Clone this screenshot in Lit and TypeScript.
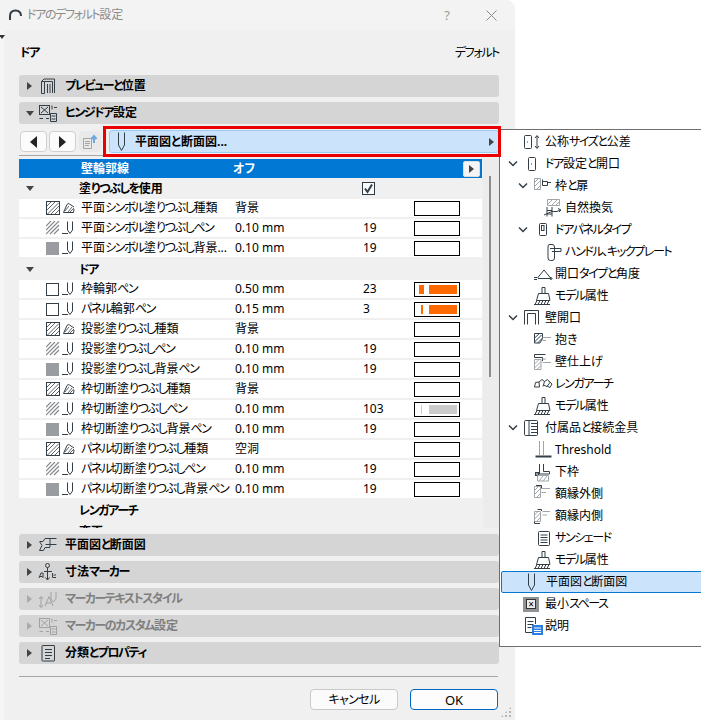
import { LitElement, html, css, svg } from "lit";
import { customElement } from "lit/decorators.js";

const ic = (w: number, h: number, body: unknown) =>
  html`<svg class="i" width=${w} height=${h} viewBox="0 0 ${w} ${h}">${body}</svg>`;

/* The reference face sets kana much narrower than kanji: tighten kana runs only. */
const jp = (s: string) =>
  s.split(/([\u3040-\u30ff、]+)/).map((p, i) => (i % 2 ? html`<span class="k">${p}</span>` : p));

/* table icons */
const hatchBox = ic(14, 14, svg`<rect x=".5" y=".5" width="13" height="13"/><path class="s" d="M1 5L5 1M1 9L9 1M1.500 13L13 1.500M5 13L13 5M9 13L13 9"/>`);
const hatchFree = ic(14, 14, svg`<path class="h" d="M0 5L5 0M0 9L9 0M0 13L13 0M4 13L13 4M8 13L13 8"/>`);
const greyBox = html`<span class="gbox"></span>`;
const emptyBox = html`<span class="ebox"></span>`;
const fillType = ic(14, 14, svg`<path d="M1.500 11.500L5 3.500Q6 2 7.500 3L12 6M1.500 11.500H11.500L12 8"/><path class="s" d="M3 10L7 5M6 11L10 6M8 11L12 7"/>`);
const pen = ic(14, 16, svg`<path d="M5.500 1.500V10L8 13.500L10.500 10V1.500M0 13.500H6"/>`);

/* accordion icons */
const a3d = ic(20, 20, svg`<path d="M3.500 5.500V17.500H6.500V5.500ZM3.500 5.500L6 3H16.500V17M6.500 5.500H14.500V17M9.500 8V17M12 8V17"/>`);
const aOpts = ic(20, 20, svg`<rect x="1.500" y="2.500" width="10" height="9"/><path d="M3 4L10 10M10 4L3 10M14 2.500V6.500M16 4.500H19M1.500 15.500H5M8 15.500H11M12.500 10.500H18.500V18.500H12.500ZM13.500 13H17.500M13.500 16H17.500"/>`);
const aPlan = ic(20, 20, svg`<path d="M2 6.500H5L7 3.500H18.500M12 3.500V12M7.500 9.500H18.500M12 12.500H7L5.500 15.500H1.500L4 10.500L1.500 6.500"/>`);
const aMark = ic(20, 20, svg`<circle cx="9.500" cy="3.500" r="2"/><path d="M9.500 5.500V17.500M7.500 15.500L9.500 18L11.500 15.500M6 9.500H14M1 16L3 11H5V16M1.500 14.500H4.500M14.500 11V15.500H18M15.500 13H18"/>`);
const aText = ic(20, 20, svg`<path class="d" d="M3 8V18M1 10L3 7.500L5 10M1 16L3 18.500L5 16M7 17L11 7.500L15 17M8.500 14H13.500M13 3V10L15.500 13L18 10V3"/>`);
const aOptsD = ic(20, 20, svg`<g class="d"><rect x="1.500" y="2.500" width="10" height="9"/><path d="M3 4L10 10M10 4L3 10M14 2.500V6.500M16 4.500H19M1.500 15.500H5M8 15.500H11M12.500 10.500H18.500V18.500H12.500ZM13.500 13H17.500M13.500 16H17.500"/></g>`);
const aInfo = ic(20, 20, svg`<path d="M4.500 2.500H16Q16.500 2.500 16.500 3V17.500Q16.500 18 16 18H4.500Q4 18 4 17.500V3Q4 2.500 4.500 2.500ZM7 6.500H14M7 9.500H14M7 12.500H14M7 15.500H12"/>`);

/* tree icons */
const hatchCol = svg`<path class="g" d="M1.500 2.500H7.500V13.500H1.500ZM1.500 6.500L5.500 2.500M1.500 10.500L7.500 4.500M3.500 13.500L7.500 9.500"/>`;
const brush = ic(20, 20, svg`<path d="M9 1.500H12V7.500H9ZM5.500 7.500H15.500L17 14.500H3.500ZM1 18.500H17M2 18.500L4 14.500M5 18.500L7 14.500M8 18.500L10 14.500M11 18.500L13 14.500M14 18.500L16 14.500"/>`);
const t: Record<string, unknown> = {
  size: ic(20, 20, svg`<rect x="1.500" y="3.500" width="7" height="13" rx="1"/><path d="M4 10h1M14 4V16M12 6L14 3.500L16 6M12 14L14 16.500L16 14"/>`),
  door: ic(20, 20, svg`<rect x="5.500" y="3.500" width="7" height="13" rx="1"/><path d="M8 10h1"/>`),
  frame: ic(20, 20, svg`${hatchCol}<path d="M9.500 5.500H14.500V9.500H9.500V3.500M14.500 6.500H18"/>`),
  vent: ic(20, 20, svg`<path class="g" d="M4.500 1.500H16.500V7.500H4.500ZM5 6L9 2M9 7L14 2M13 7L16.500 3.500"/><path d="M4 18.500V9M9 18.500V9M4 12.500H9M4 16H9M1 17L9 13.500H14L17 12M15 10.500L18 12L16 14"/>`),
  panel: ic(20, 20, svg`<rect x="6.500" y="3.500" width="7" height="12" rx="1"/><rect x="8.500" y="5.500" width="2.500" height="5"/>`),
  handle: ic(20, 20, svg`<path d="M6 2.500H9Q11.500 2.500 11.500 5V16Q11.500 18.500 9 18.500H7.500Q5 18.500 5 16V5Q5 2.500 6 2.500ZM7 6.500H18V9.500H9"/>`),
  open: ic(20, 20, svg`<path d="M4.500 14L11 6L18 14.500H5M1 13.500H4M1 15.500H4" /><circle cx="18" cy="14.500" r="1"/>`),
  brush,
  wall: ic(20, 20, svg`<path d="M1.500 16.500V2.500H15.500V16.500M4.500 16.500V5.500H12.500V16.500"/>`),
  reveal: ic(20, 20, svg`<path d="M1.500 3.500H9.500V8.500L7 13H1.500ZM1.500 8L6.500 3.500M1.500 12L8.500 5M4.500 13L9.500 8"/><path class="g" d="M9.500 7.500H18M9.500 10.500H13"/>`),
  finish: ic(20, 20, svg`<path d="M1.500 2.500H12.500M1.500 2.500V5.500H9.500V9"/><path class="g" d="M1.500 7.500H8V17.500H1.500ZM1.500 12L6 7.500M1.500 16L8 9.500M4 17.500L8 13.500M9.500 10.500H18M9.500 7H13"/>`),
  arch: ic(20, 20, svg`<path d="M1.500 13L2.500 8.500L6 8L6.500 13ZM6 8L9 5.500L11.500 7.500L10 12.500M11.500 7.500L14.500 5.500L17 8.500L14 12.500L10.500 11M16 7L19 10L17 13.500L14 12"/>`),
  thresh: ic(20, 20, svg`<path class="g" d="M6.500 1V15M10.500 1V15"/><path class="w2" d="M2.500 16.500H18.500"/>`),
  sill: ic(20, 20, svg`<path d="M6.500 2V12M10.500 2V9.500H16.500V12H2.500"/><rect x="2.500" y="10.500" width="3" height="3"/><path class="g" d="M4.500 13.500H15.500V19H4.500ZM6 19L10 14M10 19L14 14"/>`),
  casOut: ic(20, 20, svg`${hatchCol}<path d="M3 1.500H8.500V4.500"/><path class="g" d="M8.500 4.500H17M8.500 8.500H13"/>`),
  casIn: ic(20, 20, svg`<path class="g" d="M1.500 5.500H7.500V15.500H1.500ZM1.500 9L5 5.500M1.500 13L7.500 7M3.500 15.500L7.500 11.500M9.500 5.500H17M9.500 9H14"/><path d="M4.500 3.500H8.500V5M1.500 15.500V17.500H7"/>`),
  shade: ic(20, 20, svg`<rect x="5.500" y="3.500" width="11" height="14" rx="1"/><path d="M7.500 7H14.500M7.500 9.500H14.500M7.500 12H14.500M7.500 14.500H14.500"/>`),
  wallAcc: ic(20, 20, svg`<rect x="1.500" y="2.500" width="13" height="15" rx="1"/><path d="M6 2.500V17.500M8 5.500H14.500M8 8.500H14.500M8 11.500H14.500M8 14.500H14.500"/>`),
  plan: ic(20, 20, svg`<path d="M4.500 1.500V13L7.500 18.500L10.500 13V1.500"/>`),
  space: html`<span class="spacebox"><span>×</span></span>`,
  note: ic(20, 20, svg`<path d="M2.500 1.500H12.500V8M2.500 1.500V16.500H9M4.500 5.500H10.500M4.500 8.500H10.500M4.500 11.500H8.500"/><rect class="bl" x="9.500" y="9.500" width="10" height="9"/><path class="wl" d="M11 12H18M11 14.500H18M11 16.500H18"/>`),
};

const rows = [
  { k: "g", name: "塗りつぶしを使用", check: true },
  { a: hatchBox, b: fillType, name: "平面シンボル塗りつぶし種類", val: "背景", sw: "" },
  { a: hatchFree, b: pen, name: "平面シンボル塗りつぶしペン", val: "0.10 mm", n: "19", sw: "" },
  { a: greyBox, b: pen, name: "平面シンボル塗りつぶし背景...", val: "0.10 mm", n: "19", sw: "" },
  { k: "g", name: "ドア" },
  { a: emptyBox, b: pen, name: "枠輪郭ペン", val: "0.50 mm", n: "23", sw: "o1" },
  { a: emptyBox, b: pen, name: "パネル輪郭ペン", val: "0.15 mm", n: "3", sw: "o2" },
  { a: hatchBox, b: fillType, name: "投影塗りつぶし種類", val: "背景", sw: "" },
  { a: hatchFree, b: pen, name: "投影塗りつぶしペン", val: "0.10 mm", n: "19", sw: "" },
  { a: greyBox, b: pen, name: "投影塗りつぶし背景ペン", val: "0.10 mm", n: "19", sw: "" },
  { a: hatchBox, b: fillType, name: "枠切断塗りつぶし種類", val: "背景", sw: "" },
  { a: hatchFree, b: pen, name: "枠切断塗りつぶしペン", val: "0.10 mm", n: "103", sw: "gr" },
  { a: greyBox, b: pen, name: "枠切断塗りつぶし背景ペン", val: "0.10 mm", n: "19", sw: "" },
  { a: hatchBox, b: fillType, name: "パネル切断塗りつぶし種類", val: "空洞", sw: "" },
  { a: hatchFree, b: pen, name: "パネル切断塗りつぶしペン", val: "0.10 mm", n: "19", sw: "" },
  { a: greyBox, b: pen, name: "パネル切断塗りつぶし背景ペン", val: "0.10 mm", n: "19", sw: "" },
  { k: "g", name: "レンガアーチ", noTri: true },
  { k: "g", name: "変更", noTri: true },
] as any[];

const tree = [
  [0, 0, "size", "公称サイズと公差"],
  [0, 1, "door", "ドア設定と開口"],
  [1, 1, "frame", "枠と扉"],
  [2, 0, "vent", "自然換気"],
  [1, 1, "panel", "ドアパネルタイプ"],
  [2, 0, "handle", "ハンドル、キックプレート"],
  [1, 0, "open", "開口タイプと角度"],
  [1, 0, "brush", "モデル属性"],
  [0, 1, "wall", "壁開口"],
  [1, 0, "reveal", "抱き"],
  [1, 0, "finish", "壁仕上げ"],
  [1, 0, "arch", "レンガアーチ"],
  [1, 0, "brush", "モデル属性"],
  [0, 1, "wallAcc", "付属品と接続金具"],
  [1, 0, "thresh", "Threshold"],
  [1, 0, "sill", "下枠"],
  [1, 0, "casOut", "額縁外側"],
  [1, 0, "casIn", "額縁内側"],
  [1, 0, "shade", "サンシェード"],
  [1, 0, "brush", "モデル属性"],
  [0, 0, "plan", "平面図と断面図", true],
  [0, 0, "space", "最小スペース"],
  [0, 0, "note", "説明"],
] as any[];

@customElement("app-root")
export class AppRoot extends LitElement {
  static styles = css`
    :host {
      display: block;
      width: 701px;
      height: 720px;
      position: relative;
      overflow: hidden;
      background: #fff;
      font: 12px/16px "Noto Sans", "Noto Sans CJK JP", sans-serif;
      font-feature-settings: "palt";
      color: #000;
    }
    .k { letter-spacing: -1.4px; }
    .tight { letter-spacing: -0.6px; }
    .i { display: block; fill: none; stroke: #343e46; stroke-width: 1; }
    .i .g { stroke: #a3a6a9; }
    .i .h { stroke: #85898c; stroke-width: 1.2; }
    .i .s { stroke: #5f666c; }
    .i .d, .i .d * { stroke: #a2a2a2; }
    .i .bl { fill: #2f7de1; stroke: #2f7de1; }
    .i .wl { stroke: #fff; }
    .i .w2 { stroke-width: 2; }
    .i .up { stroke: #6fa8dc; stroke-width: 2; }
    .i .x { stroke: #8a8a8a; }
    .dialog {
      width: 515px;
      height: 720px;
      background: #f5f5f5;
      border-top-right-radius: 9px;
      display: flex;
      flex-direction: column;
      position: relative;
    }
    .title {
      height: 30px;
      flex: none;
      display: flex;
      align-items: center;
      background: #f3f3f3;
      border-top-right-radius: 9px;
      color: #8b8b8b;
      padding: 0 18px 0 9px;
    }
    .title .ttext { margin-left: 5px; flex: 1; }
    .title .q { font-size: 13px; color: #9a9a9a; margin-right: 36px; }
    .body {
      flex: 1;
      margin-left: 4px;
      background: #f0f0f0;
      padding: 13px 16px 0 15px;
      display: flex;
      flex-direction: column;
    }
    .mini {
      position: absolute;
      left: 0;
      top: 35px;
      border: 3px solid transparent;
      border-top: 4px solid #333;
      border-bottom: 0;
      margin-left: -1px;
    }
    .head { height: 20px; display: flex; justify-content: space-between; align-items: center; padding: 0 0 0 1px; margin-bottom: 12px; flex: none; }
    .acc {
      height: 22px;
      flex: none;
      background: #d5d5d5;
      border-radius: 3px;
      margin-bottom: 5px;
      display: flex;
      align-items: center;
      padding-left: 7px;
      font-weight: 700;
    }
    .acc.off { color: #7f7f7f; }
    .acc svg { margin-left: 5px; margin-right: 7px; }
    .tri { width: 0; height: 0; border-style: solid; border-color: transparent; flex: none; }
    .tri.r { border-width: 4px 0 4px 5px; border-left-color: #444; margin-left: 1px; margin-right: 1px; }
    .tri.dn { border-width: 5px 4px 0 4px; border-top-color: #444; }
    .off .tri.r { border-left-color: #aaa; }
    .acc .tri.dn + svg { margin-left: 4px; }
    .toolbar { height: 27px; flex: none; border-bottom: 1px solid #a6a6a6; display: flex; align-items: flex-start; padding: 2px 0 0 1px; gap: 2px; box-sizing: border-box; width: 100%; margin-bottom: 3px; }
    .tb { width: 27px; height: 21px; box-sizing: border-box; background: #fbfbfb; border: 1px solid #d0d0d0; border-radius: 4px; display: flex; align-items: center; justify-content: center; }
    .tb.ghost { width: 22px; background: #e9e9e9; border-color: #e9e9e9; margin-left: 1px; }
    .tb .l, .tb .rr { width: 0; height: 0; border-style: solid; border-color: transparent; }
    .tb .l { border-width: 6px 7px 6px 0; border-right-color: #222; }
    .tb .rr { border-width: 6px 0 6px 7px; border-left-color: #222; }
    .combo {
      margin: -1px 0 0 6px;
      flex: 1;
      height: 23px;
      box-sizing: border-box;
      background: #cce4fb;
      border: 1px solid #9ccbf5;
      border-radius: 3px;
      display: flex;
      align-items: center;
      font-weight: 700;
      padding-right: 3px;
    }
    .combo svg { margin-left: 3px; margin-right: 2px; }
    .combo .lbl { flex: 1; }
    .tableWrap { height: 369px; flex: none; display: flex; margin-bottom: 6px; }
    .table { width: 463px; height: 369px; overflow: hidden; flex: none; }
    .scroll { flex: 1; background: #ececec; position: relative; margin-left: 1px; }
    .thumb { width: 2px; height: 201px; background: #8d8d8d; margin: 17px 0 0 6px; }
    .blue { height: 19px; background: #0078d4; color: #fff; font-weight: 700; display: grid; grid-template-columns: 62px 152px 1fr 19px; align-items: center; }
    .blue .lbl { grid-column: 2; }
    .blue .more { width: 17px; height: 16px; box-sizing: border-box; background: #f5f5f5; border: 1px solid #ddd; border-radius: 2px; display: flex; align-items: center; justify-content: center; grid-column: 4; }
    .group { height: 21px; background: #f0f0f0; font-weight: 700; display: grid; grid-template-columns: 60px 283px 1fr; align-items: center; }
    .group .tri { margin-left: 7px; display: block; }
    .check { width: 13px; height: 13px; box-sizing: border-box; border: 1px solid #2f3b45; background: #fafafa; display: block; }
    .row { height: 20px; box-sizing: border-box; background: #fff; border-bottom: 2px solid #f0f0f0; display: grid; grid-template-columns: 16px 19px 154px 128px 51px 46px; padding-left: 27px; align-items: center; }
    .row .txt { white-space: nowrap; }
    .gbox { display: block; width: 13px; height: 13px; background: #999da1; }
    .ebox { display: block; width: 13px; height: 13px; box-sizing: border-box; border: 1px solid #343e46; background: #fff; }
    .sw { width: 46px; height: 15px; box-sizing: border-box; border: 1px solid #000; background: #fff; display: flex; align-items: center; padding: 0 2px 0 4px; }
    .sw i { display: block; height: 9px; background: #ff6a00; }
    .sw i.tick { width: 5px; margin-right: 5px; }
    .sw i.bar { width: 28px; }
    .sw.o2 i.tick { width: 2px; margin-left: 2px; margin-right: 6px; }
    .sw.gr i { background: #cbcbcb; }
    .sw.gr i.tick { width: 1px; margin-left: 2px; margin-right: 7px; }
    .rule { height: 1px; background: #a6a6a6; flex: none; margin-top: 7px; margin-bottom: 12px; width: 479px; }
    .btns { display: flex; justify-content: flex-end; gap: 12px; padding-right: 1px; }
    .btn { width: 88px; height: 21px; box-sizing: border-box; background: #fbfbfb; border: 1px solid #c9c9c9; border-radius: 4px; display: flex; align-items: center; justify-content: center; }
    .btn.ok { border: 1px solid #0067c0; box-shadow: inset 0 0 0 1px #fff; background: #fdfdfd; font-size: 13px; }
    .grip { position: absolute; right: 3px; bottom: 2px; width: 12px; height: 12px; background-image: radial-gradient(#b5b5b5 1px, transparent 1.2px); background-size: 4px 4px; clip-path: polygon(100% 0, 100% 100%, 0 100%); }
    .popup {
      position: absolute;
      left: 499px;
      top: 129px;
      width: 210px;
      height: 518px;
      box-sizing: border-box;
      background: #fff;
      border: 1px solid #6e6e6e;
      padding-top: 1px;
    }
    .node { height: 22px; box-sizing: border-box; display: flex; align-items: center; white-space: nowrap; }
    .node.l0 { padding-left: 8px; }
    .node.l1 { padding-left: 18px; }
    .node.l2 { padding-left: 28px; }
    .chev { width: 10px; flex: none; }
    .chev svg { stroke-width: 1.5; }
    .iconbox { width: 20px; margin-left: 5px; margin-right: 2px; flex: none; }
    .node.sel { margin-left: 1px; padding-left: 7px; background: #cce4fb; border: 1px solid #0078d4; border-radius: 2px; }
    .spacebox { display: flex; width: 16px; height: 15px; background: #8f9396; align-items: center; justify-content: center; }
    .spacebox span { display: block; width: 10px; height: 10px; box-sizing: border-box; line-height: 8px; text-align: center; border: 1px solid #333; background: #eee; font-size: 10px; }
    .red { position: absolute; left: 103px; top: 126px; width: 398px; height: 31px; box-sizing: border-box; border: 3px solid #ea0000; }
  `;

  private acc(ico: unknown, label: string, open = false, off = false) {
    return html`<div class="acc ${off ? "off" : ""}">
      <span class="tri ${open ? "dn" : "r"}"></span>${ico}<span>${jp(label)}</span>
    </div>`;
  }

  private row(r: any) {
    if (r.k === "g") {
      return html`<div class="group">
        <span>${r.noTri ? "" : html`<span class="tri dn"></span>`}</span>
        <span>${jp(r.name)}</span>
        ${r.check
          ? html`<span class="check"><svg class="i" width="11" height="11" viewBox="0 0 11 11"><path class="w2" d="M2 5.500L4.500 9L9 1.500"/></svg></span>`
          : ""}
      </div>`;
    }
    return html`<div class="row">
      ${r.a}${r.b}
      <span class="txt">${jp(r.name)}</span>
      <span>${r.val}</span>
      <span>${r.n ?? ""}</span>
      <span class="sw ${r.sw}">${r.sw ? html`<i class="tick"></i><i class="bar"></i>` : ""}</span>
    </div>`;
  }

  private node(n: any[]) {
    const [lvl, chev, ico, label, sel] = n;
    return html`<div class="node l${lvl} ${sel ? "sel" : ""}">
      <span class="chev">${chev
        ? html`<svg class="i" width="10" height="8" viewBox="0 0 10 8"><path d="M1 1.500L5 5.500L9 1.500"/></svg>`
        : ""}</span>
      <span class="iconbox">${t[ico]}</span>
      <span>${jp(label)}</span>
    </div>`;
  }

  render() {
    return html`
      <div class="dialog">
        <div class="title">
          <svg class="i" width="13" height="12" viewBox="0 0 13 12"><path class="w2" d="M1 11V7Q1 1.500 6.500 1.500Q12 1.500 12 7"/></svg>
          <span class="ttext">${jp("ドアのデフォルト設定")}</span>
          <span class="q">?</span>
          <svg class="i" width="11" height="11" viewBox="0 0 11 11"><path class="x" d="M.5 .5L10.500 10.500M10.500 .5L.5 10.500"/></svg>
        </div>
        <span class="mini"></span>
        <div class="body">
          <div class="head"><b>${jp("ドア")}</b><span>${jp("デフォルト")}</span></div>
          ${this.acc(a3d, "プレビューと位置")}
          ${this.acc(aOpts, "ヒンジドア設定", true)}
          <div class="toolbar">
            <span class="tb"><span class="l"></span></span>
            <span class="tb"><span class="rr"></span></span>
            <span class="tb ghost">
              <svg class="i" width="18" height="16" viewBox="0 0 18 16"><path class="g" d="M2.500 4.500H10.500V14.500H2.500ZM4 7.500H9M4 9.500H9M4 11.500H8"/><path class="up" d="M13 9V3M10.500 5L13 2L15.500 5"/></svg>
            </span>
            <div class="combo">
              ${ic(20, 20, svg`<path d="M5.500 .5V13L8.500 18.500L11.500 13V.5"/>`)}
              <span class="lbl">平面図と断面図...</span>
              <span class="tri r"></span>
            </div>
          </div>
          <div class="tableWrap">
            <div class="table">
              <div class="blue">
                <span class="lbl">壁輪郭線</span><span>オフ</span>
                <span class="more"><span class="tri r"></span></span>
              </div>
              ${rows.map((r) => this.row(r))}
            </div>
            <div class="scroll"><div class="thumb"></div></div>
          </div>
          ${this.acc(aPlan, "平面図と断面図")}
          ${this.acc(aMark, "寸法マーカー")}
          ${this.acc(aText, "マーカーテキストスタイル", false, true)}
          ${this.acc(aOptsD, "マーカーのカスタム設定", false, true)}
          ${this.acc(aInfo, "分類とプロパティ")}
          <div class="rule"></div>
          <div class="btns">
            <span class="btn"><span class="tight">キャンセル</span></span>
            <span class="btn ok">OK</span>
          </div>
        </div>
        <span class="grip"></span>
      </div>
      <div class="popup">${tree.map((n) => this.node(n))}</div>
      <div class="red"></div>
    `;
  }
}
